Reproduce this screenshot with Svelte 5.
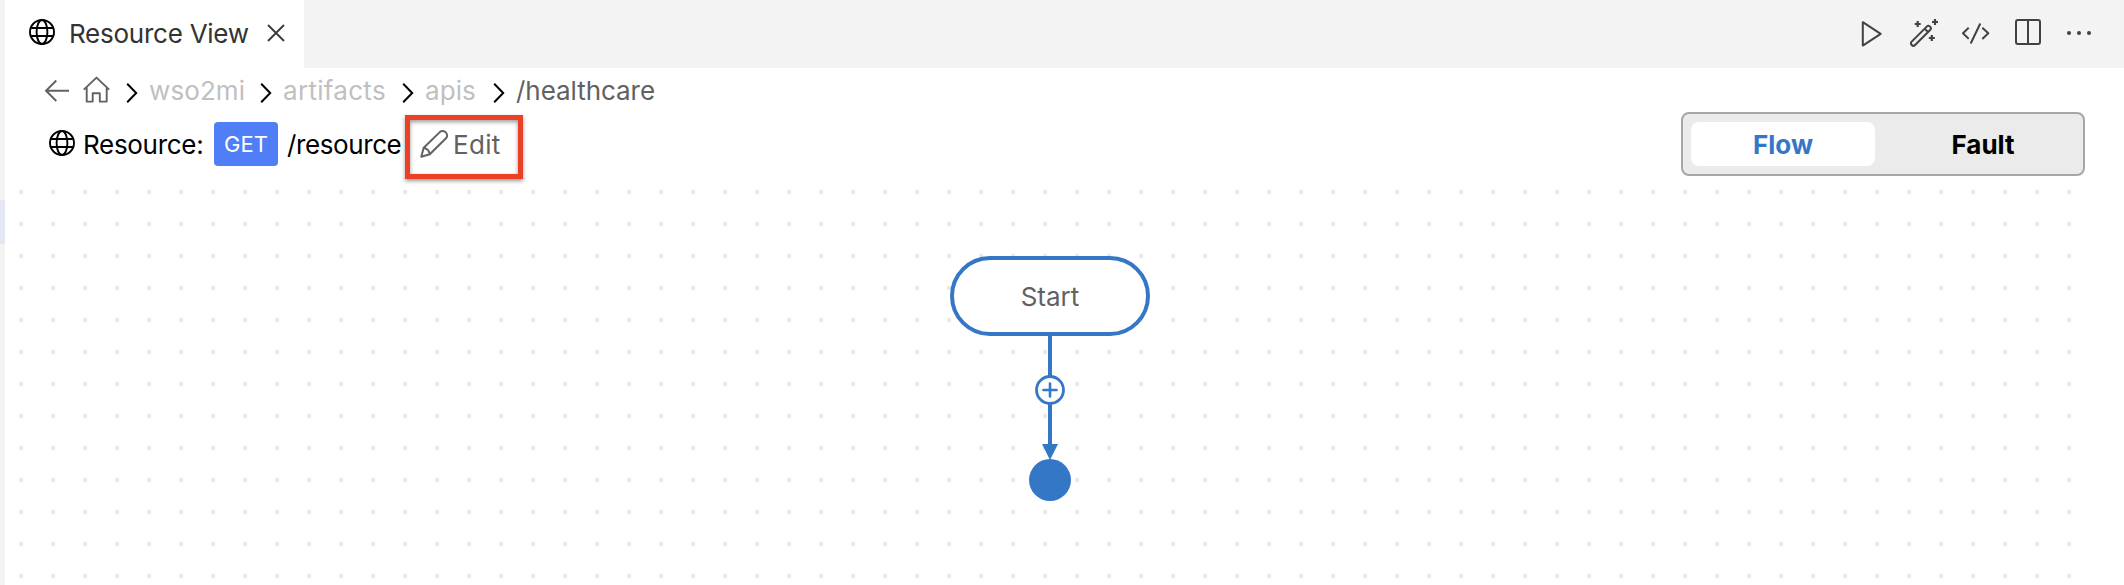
<script>
  const crumbs = [
    { name: 'wso2mi', width: 134, spacing: 0.1 },
    { name: 'artifacts', width: 142, spacing: 0.3 },
    { name: 'apis', width: 91, spacing: 0.1 },
    { name: '/healthcare', width: 150, spacing: -0.05, current: true }
  ];
</script>

{#snippet globe()}
  <svg class="globe" width="26" height="26" viewBox="0 0 26 26" fill="none" stroke="#000" stroke-width="1.9">
    <circle cx="13" cy="13" r="12" />
    <ellipse cx="13" cy="13" rx="5.4" ry="12" />
    <path d="M1.7 9H24.3M1.7 17H24.3" />
  </svg>
{/snippet}

<div class="window">
  <aside class="rail"><div class="selected"></div></aside>
  <div class="main">
    <header class="tabs">
      <div class="tab">
        {@render globe()}
        <span class="title">Resource View</span>
        <svg class="close" width="18" height="18" viewBox="0 0 18 18" fill="none" stroke="#3b3b3b" stroke-width="1.9"><path d="M1 1L17 17M17 1L1 17" /></svg>
      </div>
      <div class="actions">
        <svg width="28" height="28" viewBox="0 0 28 28" fill="none" stroke="#424242" stroke-width="2" stroke-linejoin="round"><path d="M4.8 3.2V26.6L22.7 14.8Z" /></svg>
        <svg width="28" height="28" viewBox="0 0 28 28" fill="none" stroke="#424242" stroke-width="2"><path d="M1.7 22.6L16.7 7.6A2.4 2.4 0 0 1 20.1 11L5.1 26A2.4 2.4 0 0 1 1.7 22.6ZM15 10L18 13" stroke-linejoin="round" /><path d="M4.7 5H10.7M7.7 2V8M22 3H28M25 0V6M18.8 19H24.8M21.8 16V22" stroke-width="2.2" /></svg>
        <svg class="code" width="28" height="28" viewBox="0 0 28 28" fill="none" stroke="#424242" stroke-width="2" stroke-linejoin="round"><path d="M6.7 8.7L1 14.2L6.7 19.9M20.3 8.7L26.3 14.2L20.3 19.9M18.3 4.5L8.7 24.5" /></svg>
        <svg class="split" width="28" height="28" viewBox="0 0 28 28" fill="none" stroke="#424242" stroke-width="2"><rect x="2" y="1" width="24" height="24" rx="2" /><path d="M14 1V25" /></svg>
        <svg width="28" height="28" viewBox="0 0 28 28" fill="#424242"><circle cx="4" cy="14" r="2" /><circle cx="14" cy="14" r="2" /><circle cx="24" cy="14" r="2" /></svg>
      </div>
    </header>

    <nav class="crumbs">
      <svg class="back" width="26" height="24" viewBox="0 0 26 24" fill="none" stroke="#616161" stroke-width="1.9"><path d="M12.3 1.5L2 11.8L12.3 22M2 11.8H25" /></svg>
      <svg class="home" width="27" height="27" viewBox="0 0 27 27" fill="none" stroke="#616161" stroke-width="1.9" stroke-linejoin="round"><path d="M.8 13.6L13.5 1.6L26.2 13.6M3.7 11.3V25.6H9.7V17.3H16.8V25.6H23.7V11.3" /></svg>
      {#each crumbs as crumb}
        <svg class="chevron" width="12" height="20" viewBox="0 0 12 20" fill="none" stroke="#000" stroke-width="2"><path d="M1.2 .8L10.2 10L1.2 19.2" /></svg>
        <span class="crumb" class:current={crumb.current} style="width: {crumb.width - 12}px; letter-spacing: {crumb.spacing}px">{crumb.name}</span>
      {/each}
    </nav>

    <div class="toolbar">
      {@render globe()}
      <span class="label">Resource:</span>
      <span class="method">GET</span>
      <span class="path">/resource</span>
      <button class="edit">
        <svg width="28" height="28" viewBox="0 0 28 28" fill="none" stroke="#616161" stroke-width="2" stroke-linejoin="round"><path d="M1.3 26.8L3.7 17.8L19.8 2.1A4.4 4.4 0 0 1 26 8.3L9.8 24.3ZM3.7 17.8Q8.8 18.8 9.8 24.3" /></svg>
        <span>Edit</span>
      </button>
      <div class="switch">
        <span class="option active">Flow</span>
        <span class="option">Fault</span>
      </div>
    </div>

    <div class="canvas">
      <div class="node">Start</div>
      <svg class="link" width="48" height="165" viewBox="0 0 48 165">
        <path d="M24 0V110" stroke="#3577c7" stroke-width="4" />
        <circle cx="24" cy="54" r="13.5" fill="#fff" stroke="#3577c7" stroke-width="2.8" />
        <path d="M17.5 54H30.5M24 47.5V60.5" stroke="#3577c7" stroke-width="2.6" stroke-linecap="round" />
        <path d="M16 108H32L24 124Z" fill="#3577c7" />
        <circle cx="24" cy="144" r="21" fill="#3577c7" />
      </svg>
    </div>
  </div>
</div>

<style>
  :global(body) { background: #fff; overflow: hidden; }
  .window {
    display: flex;
    width: 2124px;
    height: 585px;
    font: 400 26px/32px Inter, "Liberation Sans", sans-serif;
    color: #000;
    white-space: nowrap;
    overflow: hidden;
  }
  svg { display: block; flex: none; }
  .rail { width: 5px; background: #f3f3f3; padding-top: 200px; box-sizing: border-box; }
  .selected { height: 44px; background: #e4e6f1; }
  .main { flex: 1; display: flex; flex-direction: column; min-width: 0; }
  .tabs { height: 68px; background: #f3f3f3; display: flex; justify-content: space-between; flex: none; }
  .tab { width: 299px; background: #fff; display: flex; padding: 19px 0 0 24px; box-sizing: border-box; }
  .title { width: 198px; margin-left: 14px; line-height: 30px; color: #333; letter-spacing: -.25px; }
  .close { margin-top: 5px; }
  .actions { display: flex; gap: 24px; padding: 19px 31px 0 0; }
  .split { margin-right: -1px; }
  .crumbs { display: flex; height: 44px; padding: 9px 0 0 39px; box-sizing: border-box; flex: none; }
  .back { margin-top: 2px; }
  .home { margin: -1px 16px 0 13px; }
  .chevron { margin-top: 6px; }
  .crumb { box-sizing: border-box; padding-left: 11px; line-height: 28px; color: #c0c0c0; }
  .current { color: #616161; }
  .toolbar { display: flex; height: 70px; padding: 0 39px 0 44px; box-sizing: border-box; flex: none; }
  .toolbar .globe { margin-top: 18px; }
  .label { width: 131px; margin-left: 8px; padding-top: 17px; letter-spacing: -.3px; }
  .method { width: 64px; height: 44px; margin: 10px 9px 0 0; border-radius: 4px; background: #4f7ef7; color: #fff; font-size: 22px; line-height: 44px; text-align: center; }
  .path { width: 118px; padding-top: 17px; letter-spacing: -.4px; }
  .edit {
    display: flex;
    gap: 5px;
    width: 118px;
    height: 64px;
    margin: 3px 0 0;
    padding: 10px 0 0 10px;
    box-sizing: border-box;
    border: 5px solid #ea4126;
    background: none;
    color: #616161;
    font: inherit;
    box-shadow: 0 2px 4px rgba(0, 0, 0, .4), inset 0 2px 4px rgba(0, 0, 0, .4);
  }
  .edit span { margin-top: -1px; letter-spacing: .3px; }
  .switch { display: flex; width: 404px; height: 64px; margin-left: auto; padding: 8px; box-sizing: border-box; border: 2px solid #a6a6a6; border-radius: 8px; background: #ebebeb; }
  .option { width: 184px; flex: none; box-sizing: border-box; line-height: 46px; text-align: center; font-weight: 700; border-radius: 8px; }
  .option + .option { width: 200px; padding-left: 16px; }
  .active { background: #fff; color: #3577c7; }
  .canvas {
    display: flex;
    flex-direction: column;
    align-items: center;
    flex: 1;
    width: 2090px;
    padding-top: 74px;
    box-sizing: border-box;
    background-image: conic-gradient(from 90deg at 28px 28px, #e5eaee 25%, transparent 0);
    background-size: 32px 32px;
    background-position: -14px -20px;
  }
  .node { width: 200px; height: 80px; box-sizing: border-box; border: 4px solid #3577c7; border-radius: 40px; background: #fff; color: #616161; line-height: 74px; text-align: center; }
</style>
